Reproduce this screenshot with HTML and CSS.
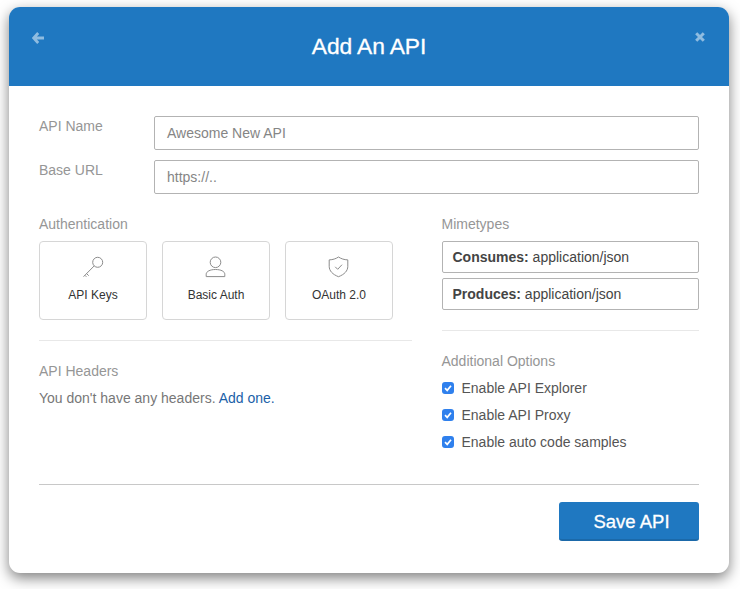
FILE: index.html
```html
<!DOCTYPE html>
<html lang="en">
<head>
<meta charset="utf-8">
<title>Add An API</title>
<link rel="stylesheet" href="styles.css">
</head>
<body>
<div class="modal">
  <header class="modal-header">
    <svg class="hdr-icon back" viewBox="0 0 12 12"><path d="M6.200 1 1.600 6 6.200 11M2 6h10" fill="none" stroke="currentColor" stroke-width="2.800"/></svg>
    <h1>Add An API</h1>
    <svg class="hdr-icon close" viewBox="0 0 10 10"><path d="M1.200 1.200 8.800 8.800M8.800 1.200 1.200 8.800" fill="none" stroke="currentColor" stroke-width="3"/></svg>
  </header>
  <div class="modal-body">
    <div class="field-row">
      <label class="field-label">API Name</label>
      <div class="text-input">Awesome New API</div>
    </div>
    <div class="field-row">
      <label class="field-label">Base URL</label>
      <div class="text-input">https://..</div>
    </div>
    <div class="columns">
      <div class="col-left">
        <div class="section-label">Authentication</div>
        <div class="auth-cards">
          <div class="auth-card">
            <svg class="auth-icon" viewBox="0 0 22 22"><circle cx="15.700" cy="6.300" r="5"/><path d="M12.200 9.900 1.500 20.700M4.600 17.600l2.100 2.100M2.900 19.300l1.500 1.500"/></svg>
            <span>API Keys</span>
          </div>
          <div class="auth-card">
            <svg class="auth-icon" viewBox="0 0 22 22"><circle cx="10.500" cy="6.300" r="5.300"/><path d="M1.200 20.600v-2.400c0-2.700 3.800-4.700 9.300-4.700s9.300 2 9.300 4.700v2.400z"/></svg>
            <span>Basic Auth</span>
          </div>
          <div class="auth-card">
            <svg class="auth-icon" viewBox="0 0 22 22"><path d="M10.500 1c2.700 1.800 5.600 2.700 9.300 2.900v6.400c0 4.600-3.400 8.100-9.300 10.400C4.600 18.400 1.200 14.900 1.200 10.300V3.900C4.900 3.700 7.800 2.800 10.500 1z"/><path d="M7.200 10.800l2.500 2.500 4.300-4.600"/></svg>
            <span>OAuth 2.0</span>
          </div>
        </div>
        <hr class="divider">
        <div class="section-label headers-label">API Headers</div>
        <p class="empty-note">You don't have any headers. <a href="#">Add one.</a></p>
      </div>
      <div class="col-right">
        <div class="section-label">Mimetypes</div>
        <div class="mime-box"><strong>Consumes:</strong> application/json</div>
        <div class="mime-box"><strong>Produces:</strong> application/json</div>
        <hr class="divider mime-divider">
        <div class="section-label options-label">Additional Options</div>
        <label class="option first-option"><span class="check"><svg viewBox="0 0 12 12"><path d="M3 6.200 5.200 8.400 9 3.800" fill="none" stroke="#fff" stroke-width="1.700"/></svg></span>Enable API Explorer</label>
        <label class="option"><span class="check"><svg viewBox="0 0 12 12"><path d="M3 6.200 5.200 8.400 9 3.800" fill="none" stroke="#fff" stroke-width="1.700"/></svg></span>Enable API Proxy</label>
        <label class="option"><span class="check"><svg viewBox="0 0 12 12"><path d="M3 6.200 5.200 8.400 9 3.800" fill="none" stroke="#fff" stroke-width="1.700"/></svg></span>Enable auto code samples</label>
      </div>
    </div>
    <footer class="modal-footer">
      <button class="save-btn" type="button">Save API</button>
    </footer>
  </div>
</div>
</body>
</html>
```
FILE: styles.css
```css
* { box-sizing: border-box; }
html, body { margin: 0; height: 100%; }
body {
  padding: 7px 11px 0 9px;
  background: #fff;
  font-family: "Liberation Sans", Arial, sans-serif;
  font-size: 14px;
  color: #555;
  overflow: hidden;
}
.modal {
  width: 720px;
  height: 566px;
  background: #fff;
  border-radius: 11px;
  box-shadow: 0 5px 14px rgba(0, 0, 0, .5);
  overflow: hidden;
}
.modal-header {
  position: relative;
  height: 79px;
  background: #1f78c1;
  display: flex;
  justify-content: center;
  padding-top: 26px;
}
.modal-header h1 {
  margin: 0;
  font-size: 22.800px;
  line-height: 26px;
  font-weight: 400;
  color: #fff;
  -webkit-text-stroke: .3px #fff;
  letter-spacing: -.1px;
}
.hdr-icon { position: absolute; color: #8fbce0; }
.back { left: 23px; top: 25px; width: 12px; height: 12px; }
.close { left: 686px; top: 25px; width: 10px; height: 10px; }
.modal-body { padding: 30px 30px 0; }
.field-row { display: flex; height: 34px; margin-bottom: 10px; }
.field-label { width: 115px; color: #969696; line-height: 20px; }
.text-input {
  flex: 1;
  border: 1px solid #b3b3b3;
  border-radius: 2px;
  padding: 0 12px;
  line-height: 32px;
  color: #858585;
}
.columns { display: flex; margin-top: 20px; height: 271px; border-bottom: 1px solid #c8c8c8; }
.col-left { width: 372.500px; margin-right: 30px; }
.col-right { width: 257.500px; }
.section-label { color: #969696; line-height: 20px; }
.auth-cards { display: flex; gap: 15px; margin-top: 7px; }
.auth-card {
  width: 108px;
  height: 79px;
  border: 1px solid #d6d6d6;
  border-radius: 4px;
  display: flex;
  flex-direction: column;
  align-items: center;
  padding-top: 14px;
  font-size: 12px;
  color: #333;
}
.auth-card span { margin-top: 9px; line-height: 16px; }
.auth-icon { width: 22px; height: 22px; fill: none; stroke: #8c8c8c; stroke-width: 1; }
.divider { margin: 20px 0 0; border: 0; border-top: 1px solid #e8e8e8; }
.headers-label { margin-top: 20px; }
.empty-note { margin: 7px 0 0; line-height: 20px; color: #777; }
.empty-note a { color: #1b5fa8; text-decoration: none; }
.mime-box {
  height: 32px;
  margin-top: 5px;
  border: 1px solid #b3b3b3;
  border-radius: 2px;
  padding: 0 10px;
  line-height: 30px;
  color: #444;
}
.section-label + .mime-box { margin-top: 7px; }
.mime-divider { margin-top: 20px; }
.options-label { margin-top: 20px; }
.option { display: flex; align-items: center; height: 27px; color: #555; }
.first-option { margin-top: 3px; }
.check {
  width: 12px;
  height: 12px;
  margin-right: 8px;
  border-radius: 3px;
  background: #2f80ed;
  display: flex;
}
.modal-footer { display: flex; justify-content: flex-end; padding-top: 17px; }
.save-btn {
  width: 140px;
  height: 39px;
  border: 0;
  border-bottom: 2px solid #1b69a9;
  border-radius: 3px;
  background: #1f78c1;
  color: #fff;
  font-family: inherit;
  font-size: 18.500px;
  -webkit-text-stroke: .3px #fff;
  padding: 2px 0 0 5px;
}
```
